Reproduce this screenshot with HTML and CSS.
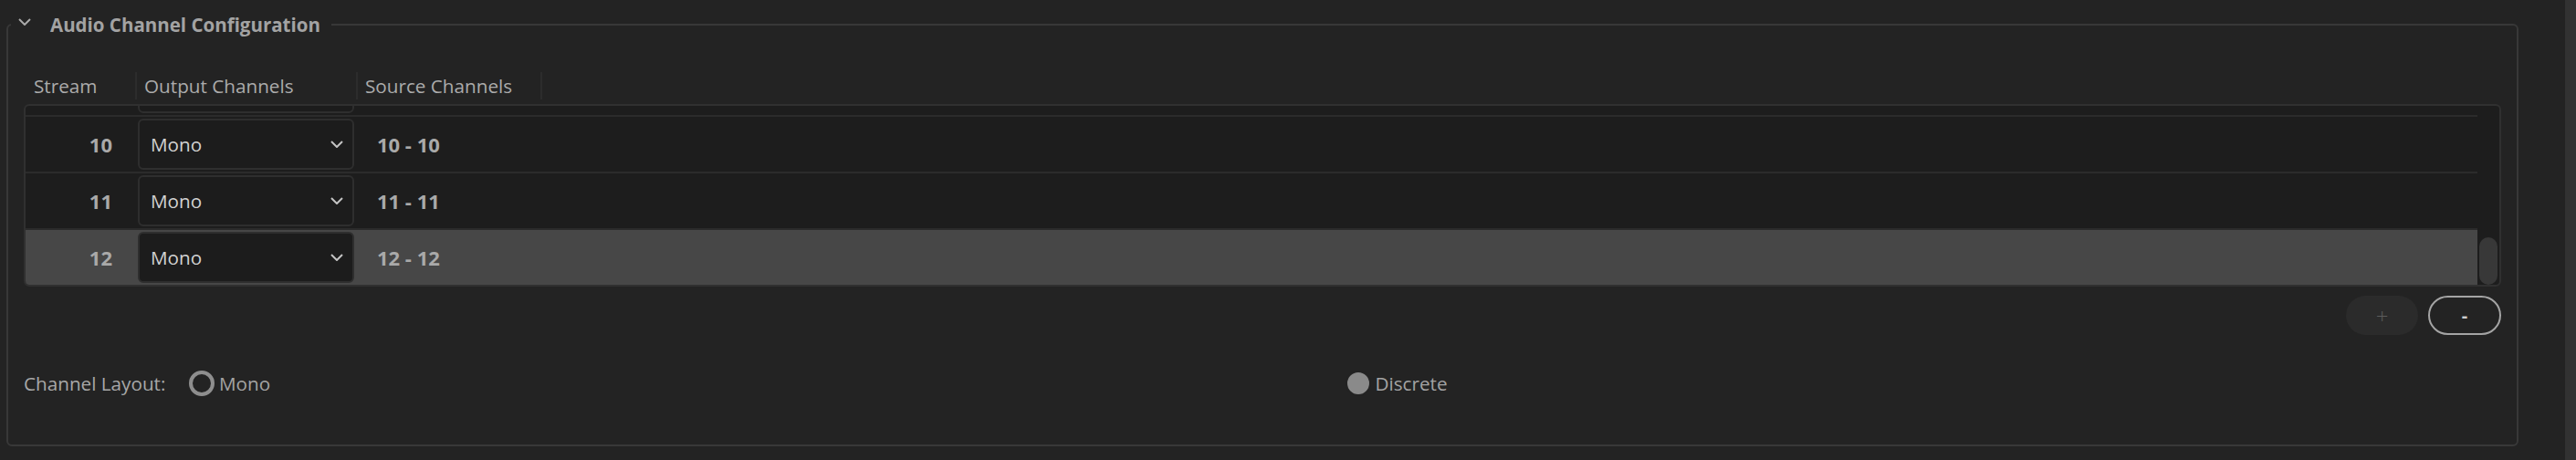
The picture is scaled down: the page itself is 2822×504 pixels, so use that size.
FILE: index.html
```html
<!DOCTYPE html>
<html lang="en">
<head>
<meta charset="utf-8">
<title>Audio Channel Configuration</title>
<link rel="stylesheet" href="styles.css">
</head>
<body>
<div class="panel">
  <fieldset class="group">
    <legend class="group-title">
      <svg class="chev-title" width="14" height="8" viewBox="0 0 14 8"><path d="M1 1 L7 7 L13 1" fill="none" stroke="#a9a9a9" stroke-width="2"/></svg>
      <span>Audio Channel Configuration</span>
    </legend>
    <div class="group-body">
      <div class="thead">
        <div class="th th-stream"><span>Stream</span></div>
        <div class="th th-output"><span>Output Channels</span></div>
        <div class="th th-source"><span>Source Channels</span></div>
      </div>
      <div class="table">
        <div class="viewport">
          <div class="rows">
            <div class="row partial">
              <div class="c-stream"></div>
              <div class="c-output"><div class="select"></div></div>
              <div class="c-source"></div>
            </div>
            <div class="row">
              <div class="c-stream">10</div>
              <div class="c-output"><div class="select"><span>Mono</span><svg class="chev" width="14" height="8" viewBox="0 0 14 8"><path d="M1 1 L7 7 L13 1" fill="none" stroke="#c4c4c4" stroke-width="2"/></svg></div></div>
              <div class="c-source">10 - 10</div>
            </div>
            <div class="row">
              <div class="c-stream">11</div>
              <div class="c-output"><div class="select"><span>Mono</span><svg class="chev" width="14" height="8" viewBox="0 0 14 8"><path d="M1 1 L7 7 L13 1" fill="none" stroke="#c4c4c4" stroke-width="2"/></svg></div></div>
              <div class="c-source">11 - 11</div>
            </div>
            <div class="row selected">
              <div class="c-stream">12</div>
              <div class="c-output"><div class="select"><span>Mono</span><svg class="chev" width="14" height="8" viewBox="0 0 14 8"><path d="M1 1 L7 7 L13 1" fill="none" stroke="#c4c4c4" stroke-width="2"/></svg></div></div>
              <div class="c-source">12 - 12</div>
            </div>
          </div>
        </div>
        <div class="scrolltrack"><div class="thumb"></div></div>
      </div>
      <div class="actions">
        <button class="btn btn-add" disabled>+</button>
        <button class="btn btn-remove">-</button>
      </div>
      <div class="layout-row">
        <div class="layout-label">Channel Layout:</div>
        <div class="radios">
          <label class="radio"><span class="dot ring"></span><span>Mono</span></label>
          <label class="radio"><span class="dot filled"></span><span>Discrete</span></label>
        </div>
      </div>
    </div>
  </fieldset>
</div>
<div class="strip"></div>
</body>
</html>
```

FILE: styles.css
```css
html, body {
  margin: 0;
  padding: 0;
  background: #232323;
  height: 100%;
}
body {
  display: flex;
  font-family: "Open Sans", "Noto Sans", sans-serif;
  font-size: 20.7px;
  color: #a8a8a8;
  overflow: hidden;
}
.panel {
  flex: 1;
  min-width: 0;
}
.strip {
  width: 12px;
  background: #323232;
}
.group {
  margin: 11px 0 0 7px;
  width: 2752px;
  box-sizing: border-box;
  border: 2px solid #383838;
  border-radius: 6px;
  padding: 0;
  min-width: 0;
}
.group-title {
  margin-left: 3px;
  padding: 0 12px 0 8px;
  height: 32px;
  display: flex;
  align-items: center;
  font-weight: 700;
  font-size: 20.5px;
  color: #a3a3a3;
}
.chev-title {
  margin-right: 21px;
  margin-top: -6px;
}
.group-body {
  padding: 0 17px 47px 17px;
}
.thead {
  margin-top: 36px;
  height: 30px;
  display: flex;
  align-items: stretch;
}
.th {
  box-sizing: border-box;
  color: #ababab;
  white-space: nowrap;
  line-height: 30px;
}
.th-stream { width: 122px; padding-left: 11px; }
.th-output { width: 242px; padding-left: 8px; border-left: 2px solid #2c2c2c; }
.th-source { width: 204px; padding-left: 8px; border-left: 2px solid #2c2c2c; border-right: 2px solid #2c2c2c; }
.table {
  margin-top: 5px;
  height: 200px;
  box-sizing: border-box;
  border: 2px solid #303030;
  border-radius: 6px;
  background: #1d1d1d;
  display: flex;
  overflow: hidden;
}
.viewport {
  flex: 1;
  overflow: hidden;
}
.rows {
  margin-top: -50px;
}
.row {
  height: 60px;
  border-bottom: 2px solid #2b2b2b;
  display: grid;
  grid-template-columns: 123px 237px 1fr;
  align-items: center;
}
.row.selected {
  background: #474747;
}
.c-stream {
  text-align: right;
  padding-right: 28px;
  font-weight: 700;
  font-size: 22px;
  color: #a9a9a9;
}
.c-output {
  height: 100%;
  display: flex;
  align-items: center;
}
.select {
  height: 56px;
  width: 100%;
  box-sizing: border-box;
  border: 2px solid #2e2e2e;
  border-radius: 6px;
  background: #1c1c1c;
  display: flex;
  align-items: center;
  justify-content: space-between;
  padding: 0 10px 0 12px;
  color: #d2d2d2;
}
.c-source {
  padding-left: 25px;
  font-weight: 700;
  font-size: 22px;
  color: #a9a9a9;
}
.scrolltrack {
  width: 24px;
  display: flex;
  flex-direction: column;
  justify-content: flex-end;
}
.thumb {
  margin-left: 2px;
  width: 20px;
  height: 52px;
  border-radius: 10px;
  background: #383838;
}
.actions {
  margin-top: 10px;
  display: flex;
  justify-content: flex-end;
  gap: 11px;
}
.btn {
  height: 43px;
  border-radius: 22px;
  font-family: inherit;
  padding: 0;
  display: flex;
  align-items: center;
  justify-content: center;
}
.btn-add {
  width: 79px;
  background: #2b2b2b;
  border: none;
  color: #5c5c5c;
  font-size: 24px;
  font-weight: 300;
}
.btn-remove {
  width: 80px;
  background: transparent;
  border: 2.5px solid #a4a4a4;
  color: #cfcfcf;
  font-size: 20px;
  font-weight: 700;
}
.layout-row {
  margin-top: 33px;
  height: 40px;
  display: flex;
  align-items: center;
}
.layout-label {
  width: 181px;
  color: #a8a8a8;
  white-space: nowrap;
}
.radios {
  flex: 1;
  display: grid;
  grid-template-columns: 1fr 1fr;
}
.radio {
  display: flex;
  align-items: center;
  gap: 5px;
  color: #a3a3a3;
}
.dot {
  width: 28px;
  height: 28px;
  box-sizing: border-box;
  border-radius: 50%;
  display: block;
}
.dot.ring {
  border: 4px solid #8e8e8e;
}
.dot.filled {
  background: #8a8a8a;
  border: 2px solid #232323;
}
```
